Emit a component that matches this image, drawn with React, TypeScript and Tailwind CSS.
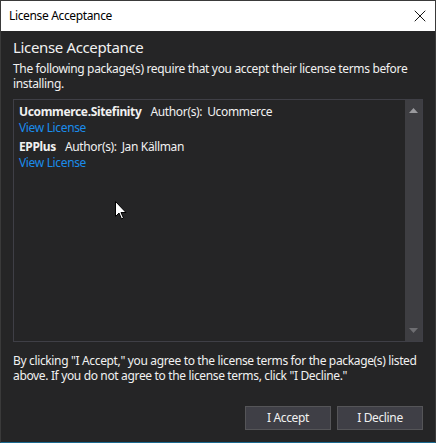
import { X } from "lucide-react";

const packages = [
  { name: "Ucommerce.Sitefinity", author: "Ucommerce" },
  { name: "EPPlus", author: "Jan Källman" },
];

const font = "font-['Segoe_UI','Noto_Sans',sans-serif]";

export default function App() {
  return (
    <div
      className={`relative flex h-[443px] w-[436px] flex-col border-x border-t border-x-[#3a3a3a] border-t-[#3a3a3a] border-b border-b-[#1b6a90] bg-[#252526] tracking-[-0.35px] ${font}`}
    >
      {/* title bar */}
      <div className="flex h-[30px] items-center justify-between bg-white pl-2 pr-[5px]">
        <span className="text-[12px] text-black">License Acceptance</span>
        <X size={20} strokeWidth={1.1} className="text-black" />
      </div>

      <div className="flex flex-1 flex-col px-3 pt-[6px] text-[#f1f1f1]">
        <h1 className="text-[15px] leading-[20px]">License Acceptance</h1>
        <p className="mt-[4px] text-[12px] leading-[15px]">
          The following package(s) require that you accept their license terms before installing.
        </p>

        {/* package list */}
        <div className="mt-[8px] flex h-[243px] border border-[#3f3f46]">
          <div className="flex flex-1 flex-col gap-[3px] pl-[5px] pt-[4px]">
            {packages.map((p) => (
              <div key={p.name} className="flex flex-col text-[12px] leading-[16px]">
                <div>
                  <span className="font-bold">{p.name}</span>
                  <span className="ml-[9px]">Author(s):</span>
                  <span className="ml-[5px]">{p.author}</span>
                </div>
                <span className="text-[#1a8ceb]">View License</span>
              </div>
            ))}
          </div>
          <div className="flex w-[17px] flex-col items-center justify-between bg-[#3e3e42] py-[8px]">
            <svg width="9" height="5" viewBox="0 0 9 5">
              <polygon points="0,5 9,5 4.5,0" fill="#9a9a9e" />
            </svg>
            <svg width="9" height="5" viewBox="0 0 9 5">
              <polygon points="0,0 9,0 4.5,5" fill="#6e6e72" />
            </svg>
          </div>
        </div>

        <p className="mt-[11px] text-[12px] leading-[15px]">
          By clicking "I Accept," you agree to the license terms for the package(s) listed above. If you do
          not agree to the license terms, click "I Decline."
        </p>

        <div className="mt-auto mb-[12px] flex justify-end gap-[6px]">
          <button className="h-[24px] w-[86px] border border-[#555558] bg-[#3f3f46] text-[12px] text-[#f1f1f1]">
            I Accept
          </button>
          <button className="h-[24px] w-[86px] border border-[#555558] bg-[#3f3f46] text-[12px] text-[#f1f1f1]">
            I Decline
          </button>
        </div>
      </div>

      {/* mouse pointer */}
      <svg className="absolute left-[114px] top-[200px]" width="12" height="19" viewBox="0 0 12 19">
        <path
          d="M0.5 0.5 L0.5 15.5 L4 12 L6.5 18 L8.5 17 L6 11.5 L11 11.5 Z"
          fill="#fff"
          stroke="#000"
          strokeWidth="1"
        />
      </svg>
    </div>
  );
}
